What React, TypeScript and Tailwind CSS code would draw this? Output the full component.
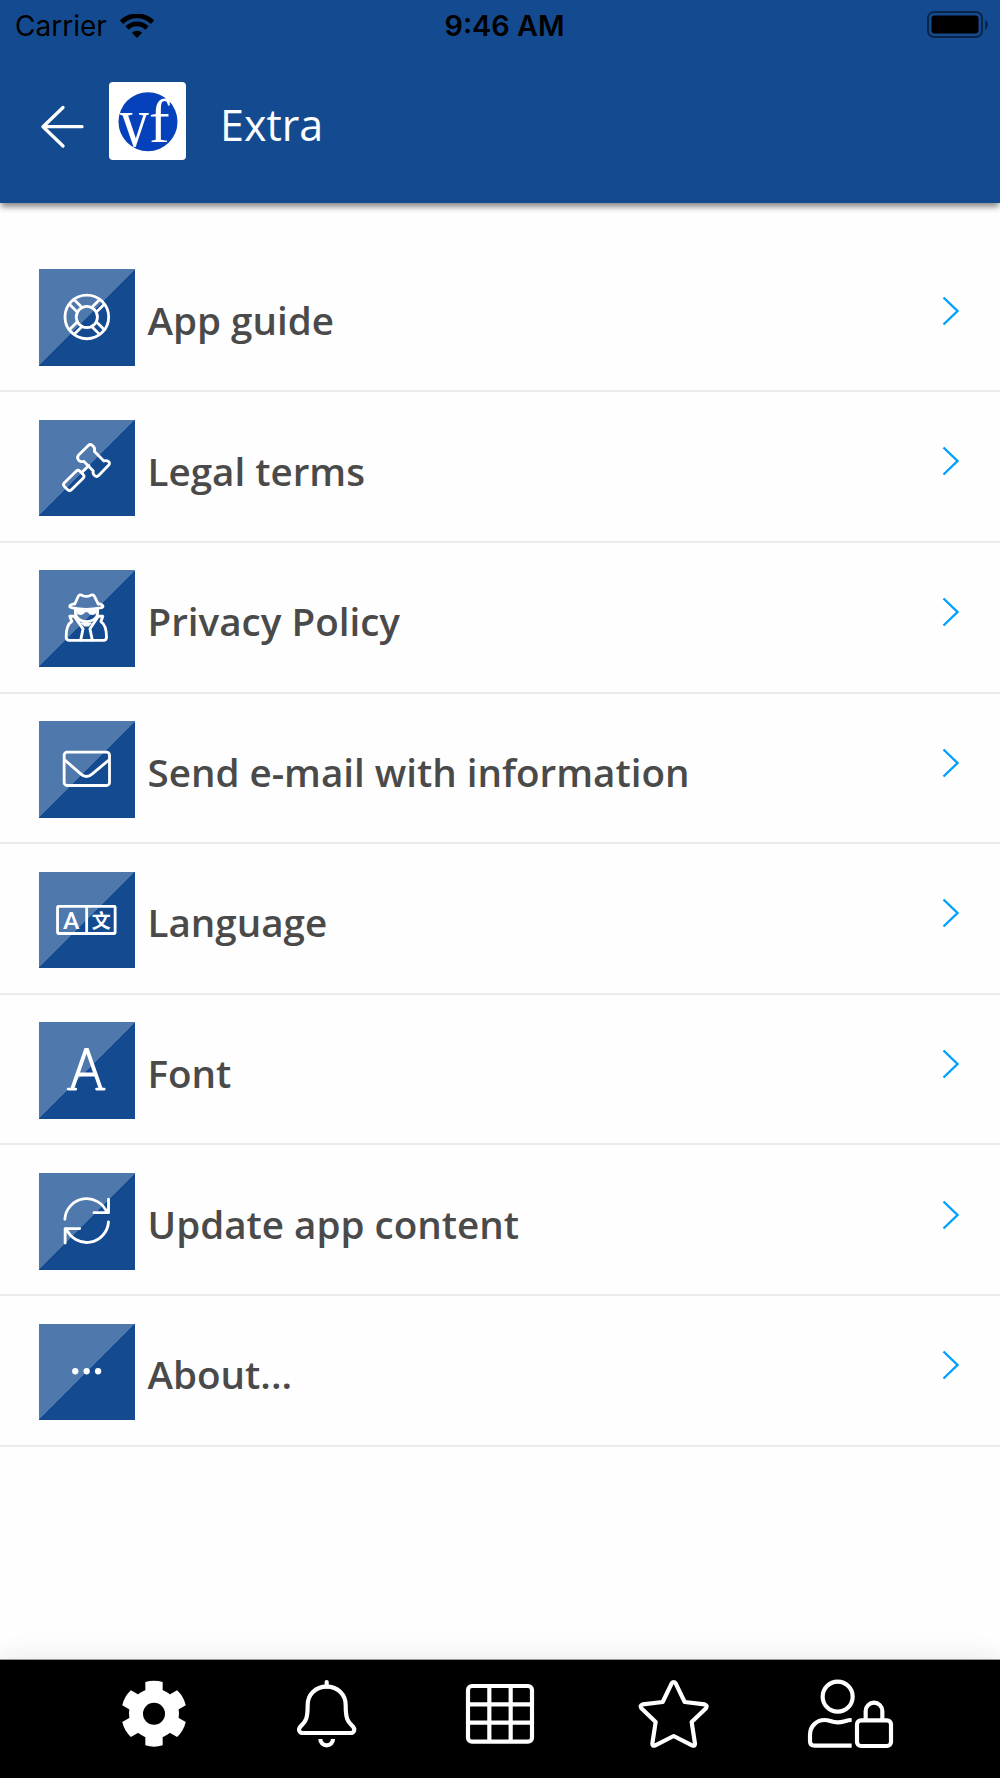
import type { ReactNode } from 'react';
import { LiaFontSolid } from 'react-icons/lia';

interface MenuItem {
  label: string;
  icon: ReactNode;
}

function TileIcon({ children }: { children: ReactNode }) {
  return (
    <svg
      viewBox="0 0 290 290"
      className="w-full h-full"
      fill="none"
      stroke="white"
      strokeWidth="8.500"
      strokeLinecap="round"
      strokeLinejoin="round"
    >
      {children}
    </svg>
  );
}

const menuItems: MenuItem[] = [
  {
    label: 'App guide',
    icon: (
      <TileIcon>
        <circle cx="144.500" cy="144" r="66" />
        <circle cx="144.500" cy="144" r="32" />
        {[45, 135, 225, 315].map((deg) => (
          <path key={deg} d="M175 134H208M175 154H208" transform={`rotate(${deg} 144.500 144)`} />
        ))}
      </TileIcon>
    ),
  },
  {
    label: 'Legal terms',
    icon: (
      <TileIcon>
        <path d="M119 106L149 76Q155 71 161 76L165 80Q170 86 167 94L196 123Q204 120 210 125Q216 130 210 136L181 166Q174 173 168 167Q161 161 164 153L135 124Q127 127 121 122Q113 114 119 106Z" />
        <path d="M131 156L151 137" />
        <rect x="72" y="167" width="66" height="30" rx="8" transform="rotate(-45 105 182)" />
      </TileIcon>
    ),
  },
  {
    label: 'Privacy Policy',
    icon: (
      <TileIcon>
        <path d="M108 102L118 80Q122 71 131 76Q143 82 155 76Q163 71 168 80L179 102" />
        <path d="M108 101C88 105 90 112 101 114Q143 122 185 114C198 111 196 105 179 101" />
        <path d="M110 120V129C112 164 176 164 177 129V120" />
        <path
          d="M113 119H174V126C171 137 153 139 148 127H139C133 139 115 137 113 126Z"
          fill="white"
          stroke="none"
        />
        <path d="M108 139L93 139L99 155C83 164 82 185 82 202Q82 212 92 212H195Q204 212 204 202C204 185 201 164 187 155L193 139L178 139" />
        <path d="M108 141L133 177L126 211M178 141L154 177L161 211" />
        <path d="M129 160H157L149 168H138Z" fill="white" strokeWidth="4" />
      </TileIcon>
    ),
  },
  {
    label: 'Send e-mail with information',
    icon: (
      <TileIcon>
        <rect x="76" y="93" width="137" height="101" rx="9" />
        <path d="M79 118L126 159Q143 175 161 159L210 118" />
      </TileIcon>
    ),
  },
  {
    label: 'Language',
    icon: (
      <TileIcon>
        <rect x="56" y="103" width="174" height="82" rx="3" />
        <path d="M144 103V185" />
        <text x="97" y="171" textAnchor="middle" fill="white" stroke="none" className="font-['Roboto',sans-serif] font-medium text-[75px]">
          A
        </text>
        <text x="188" y="167" textAnchor="middle" fill="white" stroke="none" className="font-['Noto_Sans_CJK_SC',sans-serif] font-bold text-[57px]">
          文
        </text>
      </TileIcon>
    ),
  },
  {
    label: 'Font',
    icon: (
      <TileIcon>
        <LiaFontSolid x="45" y="41" size="197" color="white" />
        <path d="M88 202H111M174 202H197" />
      </TileIcon>
    ),
  },
  {
    label: 'Update app content',
    icon: (
      <TileIcon>
        <path d="M78.100 139A66 66 0 0 1 205.500 119M210 78V119H166" />
        <path d="M209.900 147A66 66 0 0 1 82.500 167M79 211V167H123" />
      </TileIcon>
    ),
  },
  {
    label: 'About...',
    icon: (
      <TileIcon>
        <g fill="white" stroke="none">
          <circle cx="109.500" cy="142" r="9.500" />
          <circle cx="144" cy="142" r="9.500" />
          <circle cx="178.500" cy="142" r="9.500" />
        </g>
      </TileIcon>
    ),
  },
];

function TabIcon({ label, children }: { label: string; children: ReactNode }) {
  return (
    <button aria-label={label} className="flex-1 flex justify-center">
      <svg
        viewBox="0 0 270 210"
        className="w-[90px] h-[70px] overflow-visible"
        fill="none"
        stroke="white"
        strokeWidth="12.500"
        strokeLinejoin="round"
      >
        {children}
      </svg>
    </button>
  );
}

function StatusBar() {
  return (
    <div className="h-12 pt-[3px] pl-[15px] pr-[11px] grid grid-cols-3 items-center font-['Inter',sans-serif] text-black">
      <div className="flex items-center gap-[13px] text-[28px]">
        <span>Carrier</span>
        <svg viewBox="0 0 34 24" className="w-[34px] h-6" fill="none" stroke="black">
          <path d="M1.500 8.200A22 22 0 0 1 32.500 8.200" strokeWidth="4.800" />
          <path d="M7 14A14.200 14.200 0 0 1 27 14" strokeWidth="4.800" />
          <path d="M17 24L11.800 18.800A7.400 7.400 0 0 1 22.200 18.800Z" fill="black" stroke="none" />
        </svg>
      </div>
      <span className="justify-self-center ml-[5px] text-[28.8px] font-semibold">9:46 AM</span>
      <svg viewBox="0 0 62 28" className="justify-self-end w-[62px] h-7 mb-[2px]">
        <rect x="1" y="1" width="54" height="25" rx="6" fill="none" stroke="black" strokeOpacity=".5" strokeWidth="2" />
        <rect x="4.500" y="4.500" width="47" height="18" rx="3" />
        <path d="M58 9Q61 10.500 61 13.700T58 19Z" fillOpacity=".5" />
      </svg>
    </div>
  );
}

function Header() {
  return (
    <header className="relative z-10 h-[203px] shrink-0 bg-[#144b90] shadow-[0_5px_6px_-1px_rgba(0,0,0,0.45)]">
      <StatusBar />
      <div className="flex pt-[34px] pl-10">
        <svg viewBox="0 0 46 46" className="w-[46px] h-[46px] mt-[22px]" fill="none" stroke="white" strokeWidth="3.300" strokeLinecap="round" strokeLinejoin="round">
          <path d="M42 22.700H3M23 3.500L3 22.700L23 42" />
        </svg>
        <div className="ml-[23px] w-[77px] h-[78px] rounded bg-white">
          <svg viewBox="0 0 77 78" className="w-full h-full">
            <circle cx="39" cy="39.700" r="29.500" fill="#0541bb" />
            <g fill="white" className="font-['Liberation_Serif',serif]">
              <text transform="translate(11 64) scale(.8 1)" className="text-[72px]">v</text>
              <text x="40" y="60" className="text-[62px]">f</text>
            </g>
          </svg>
        </div>
        <h1 className="ml-[34px] mt-[13px] font-['Open_Sans',sans-serif] text-[43px] leading-[60px] text-white">Extra</h1>
      </div>
    </header>
  );
}

function MenuRow({ label, icon }: MenuItem) {
  return (
    <li className="h-[150.65px] flex items-center pl-[39px] pr-[40.5px] border-b-2 border-[#ebebeb]">
      <div className="w-[96px] h-[96.5px] mt-[3px] flex items-center justify-center bg-[linear-gradient(135deg,#4f78ac_50%,#144b90_50%)]">
        {icon}
      </div>
      <span className="flex-1 mt-[8px] pl-[12.5px] font-['Open_Sans',sans-serif] font-semibold text-[38.6px] leading-[54px] text-[#4a4a4a]">
        {label}
      </span>
      <svg viewBox="0 0 18 30" className="w-[18px] h-[30px] mb-[10.5px]" fill="none" stroke="#00a0ff" strokeWidth="2.400">
        <path d="M1.500 1.500L15.500 15L1.500 28.500" />
      </svg>
    </li>
  );
}

function TabBar() {
  return (
    <nav className="h-[118px] shrink-0 px-[67px] pt-[18px] flex items-start bg-black shadow-[0_-1px_0_#999,0_-4px_24px_rgba(0,0,0,0.08)]">
      <TabIcon label="Settings">
        <g fill="white" stroke="none">
          <circle cx="135" cy="107" r="75" />
          {[0, 60, 120].map((deg) => (
            <path
              key={deg}
              d="M109 12Q135 4 161 12V202Q135 210 109 202Z"
              transform={`rotate(${deg} 135 107)`}
            />
          ))}
          <circle cx="135" cy="107" r="33" fill="black" />
        </g>
      </TabIcon>
      <TabIcon label="Notifications">
        <path d="M134 26C100 26 77 50 77 81C77 128 69 131 55 146C47 156 53 165 62 165H206C215 165 221 156 213 146C199 131 191 128 191 81C191 50 168 26 134 26Z" />
        <path d="M134 12V26" strokeLinecap="round" />
        <path d="M115 183A19 19 0 0 0 153 183" />
      </TabIcon>
      <TabIcon label="Grid">
        <rect x="39" y="24" width="192" height="167" rx="12" />
        <path d="M103 24V191M167 24V191M39 79H231M39 134H231" />
      </TabIcon>
      <TabIcon label="Favourites">
        <path d="M131 16Q137 8 143 16L170 72L230 79Q240 83 234 91L191 132L201 197Q201 206 192 202L137 174L82 202Q73 206 73 197L83 132L40 91Q34 83 44 79L104 72Z" />
      </TabIcon>
      <TabIcon label="Account">
        <circle cx="110" cy="56" r="45" />
        <path d="M152 126C134 126 129 133 110 133C91 133 86 126 71 126C49 126 27 142 27 171V189Q27 203 41 203H152" />
        <rect x="168" y="127" width="102" height="77" rx="12" />
        <path d="M194 127V99A25 25 0 0 1 244 99V127" />
      </TabIcon>
    </nav>
  );
}

export default function App() {
  return (
    <div className="w-[1000px] h-[1778px] flex flex-col bg-[#fefefe] overflow-hidden">
      <Header />
      <main className="flex-1 pt-[38.6px]">
        <ul>
          {menuItems.map((item) => (
            <MenuRow key={item.label} {...item} />
          ))}
        </ul>
      </main>
      <TabBar />
    </div>
  );
}
